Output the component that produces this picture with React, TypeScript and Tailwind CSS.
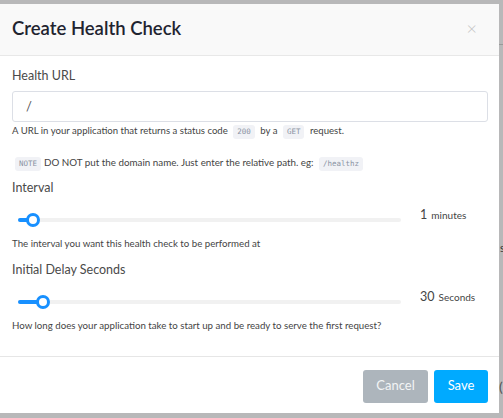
import React from "react";

function Code({ children }: { children: React.ReactNode }) {
  return (
    <span className="mx-[3px] inline-block rounded-[3px] bg-[#f1f2f6] px-[4px] font-['DejaVu_Sans_Mono',monospace] text-[7.5px] leading-[14px] text-[#8a93a3]">
      {children}
    </span>
  );
}

function Slider({ pos }: { pos: number }) {
  return (
    <div className="relative ml-[6px] h-[4px] w-[383px] rounded-full bg-[#f1f1f1]">
      <div className="absolute left-0 top-0 h-[4px] rounded-full bg-[#1890ff]" style={{ width: pos }} />
      <div
        className="absolute top-[-5px] h-[14px] w-[14px] rounded-full border-[3px] border-[#1890ff] bg-white"
        style={{ left: pos - 7 }}
      />
    </div>
  );
}

export default function App() {
  return (
    <div className="relative h-[418px] w-[503px] overflow-hidden bg-[#b8b8b9] pt-[4px] font-['Lato','Liberation_Sans',sans-serif]">
      <span className="absolute left-[500px] top-[240px] text-[11px] text-[#333]">s</span>
      <span className="absolute left-[499px] top-[376px] text-[14px] text-[#555]">(</span>
      <div className="absolute left-[499px] top-[44px] h-px w-[4px] bg-[#999]" />
      <div className="flex h-[409px] w-[499px] flex-col bg-white">
        <div className="flex h-[52px] items-center justify-between border-b border-[#e8e8e8] bg-[#f9f9f9] pb-[3px] pl-[12px] pr-[22px]">
          <h1 className="text-[18.5px] font-semibold leading-none text-[#1f2430]">Create Health Check</h1>
          <span className="text-[18px] font-light leading-none text-[#c4c4c4]">×</span>
        </div>
        <div className="flex-1 px-[12px] pt-[10px]">
          <div className="h-[20px] text-[12.5px] leading-[20px] text-[#4a4a4a]">Health URL</div>
          <div className="mt-[5px] flex h-[31px] w-[476px] items-center rounded-[3px] border border-[#dcdfe6] pl-[13px] text-[13px] text-[#555]">
            /
          </div>
          <div className="mt-px h-[16px] text-[9.6px] leading-[16px] text-[#444]">
            A URL in your application that returns a status code <Code>200</Code> by a <Code>GET</Code> request.
          </div>
          <div className="mt-[13px] h-[20px] text-[9.8px] leading-[20px] text-[#444]">
            <Code>NOTE</Code>DO NOT put the domain name. Just enter the relative path. eg: <Code>/healthz</Code>
          </div>
          <div className="mt-[6px] h-[20px] text-[12.5px] leading-[20px] text-[#4a4a4a]">Interval</div>
          <div className="mt-[10px] flex h-[24px] items-center">
            <Slider pos={15} />
            <div className="-mt-[14px] ml-[19px] text-[#444]">
              <span className="text-[12.5px]">1</span> <span className="text-[10px]">minutes</span>
            </div>
          </div>
          <div className="mt-[3px] h-[16px] text-[9.7px] leading-[16px] text-[#444]">
            The interval you want this health check to be performed at
          </div>
          <div className="mt-[9px] h-[20px] text-[12.5px] leading-[20px] text-[#4a4a4a]">Initial Delay Seconds</div>
          <div className="mt-[10px] flex h-[24px] items-center">
            <Slider pos={25} />
            <div className="-mt-[14px] ml-[19px] text-[#444]">
              <span className="text-[12.5px]">30</span> <span className="text-[10px]">Seconds</span>
            </div>
          </div>
          <div className="mt-[3px] h-[16px] text-[9.7px] leading-[16px] text-[#444]">
            How long does your application take to start up and be ready to serve the first request?
          </div>
        </div>
        <div className="flex h-[57px] items-center justify-end gap-[6px] border-t border-[#e6e6e6] pr-[11px] pt-[2px]">
          <button className="h-[33px] w-[65px] rounded-[3px] bg-[#adb5bc] text-[13px] text-[#f2f4f5]">Cancel</button>
          <button className="h-[33px] w-[54px] rounded-[3px] bg-[#00aaff] text-[13px] text-white">Save</button>
        </div>
      </div>
    </div>
  );
}
